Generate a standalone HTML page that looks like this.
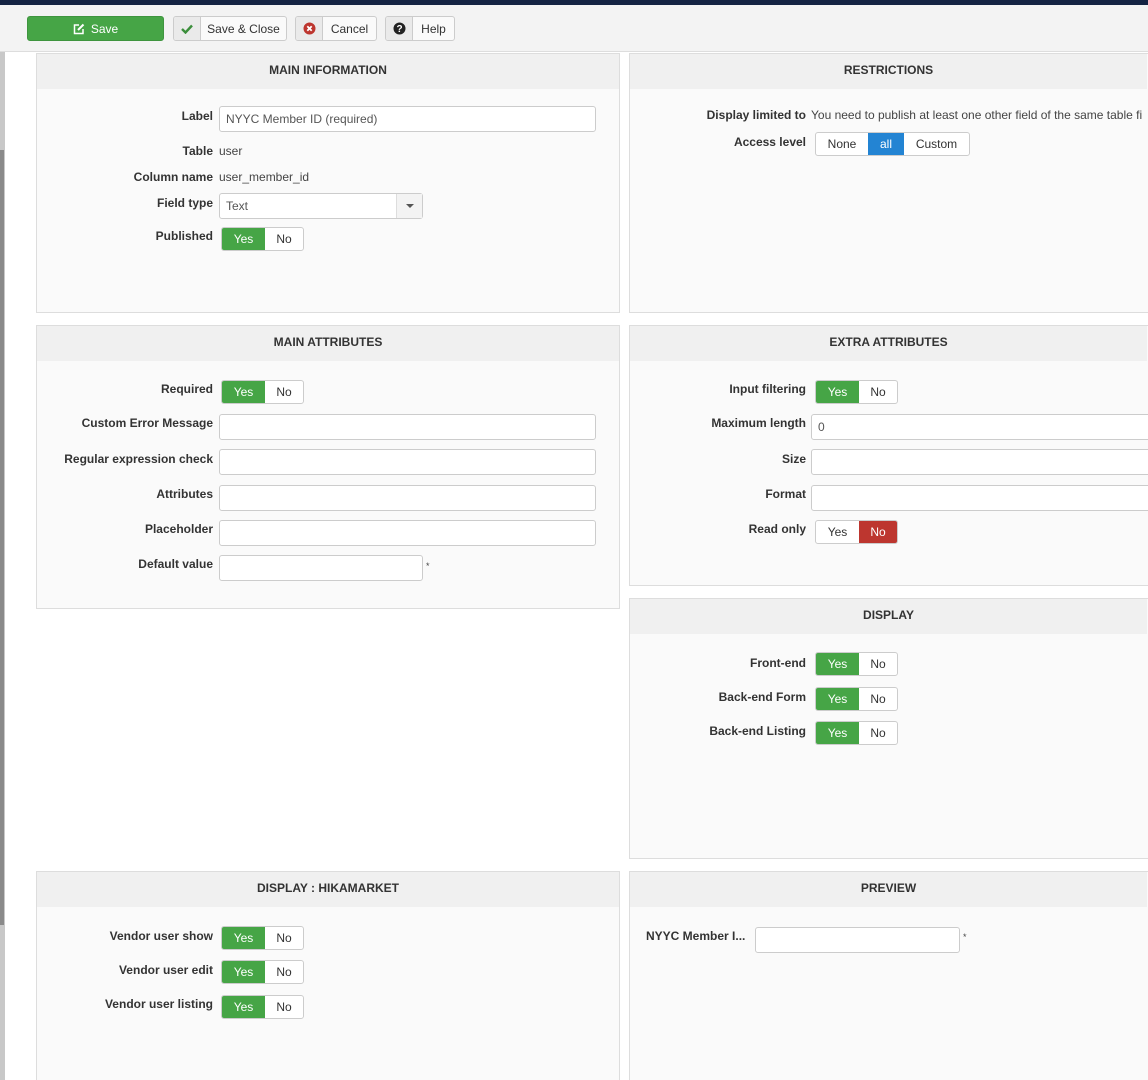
<!DOCTYPE html>
<html><head><meta charset="utf-8"><style>
*{box-sizing:border-box;margin:0;padding:0}
html,body{width:1148px;height:1080px;overflow:hidden}
body{background:#fff;font-family:"Liberation Sans",Arial,sans-serif;font-size:12px;color:#333;position:relative}
.a{position:absolute}
.topbar{left:0;top:0;width:1148px;height:5px;background:#142343}
.tool{left:0;top:5px;width:1148px;height:47px;background:#f3f3f3;border-bottom:1px solid #ddd}
.strip{left:0;top:52px;width:5px;height:1028px;background:#c8c8c8}
.strip2{left:0;top:150px;width:4px;height:775px;background:#8a8a8a}
.btn{top:16px;height:25px;border:1px solid #ccc;border-radius:3px;background:#fafafa;display:flex;align-items:center;font-size:12px;color:#333;overflow:hidden}
.btn .ic{width:27px;height:100%;background:#eaeaea;border-right:1px solid #ccc;display:flex;align-items:center;justify-content:center}
.btn .tx{flex:1;text-align:center}
.panel{background:#fafafa;border:1px solid #ddd}
.ph{position:absolute;left:0;top:0;right:0;height:35px;background:#f0f0f0;text-align:center;line-height:33px;font-weight:bold;font-size:12px;color:#333}
.lbl{font-weight:bold;text-align:right;width:177px;font-size:12px;color:#333}
.val{font-size:12px;color:#444}
.inp{height:26px;background:#fff;border:1px solid #ccc;border-radius:3px;font-size:12px;color:#555;padding-left:6px;line-height:24px}
.tog{height:24px;display:flex;border:1px solid #ccc;border-radius:3px;overflow:hidden;font-size:12px;background:#fff}
.tog span{display:flex;align-items:center;justify-content:center;color:#333}
.tog .y{width:43px}.tog .n{width:38px}
.g{background:#46a546;color:#fff!important}
.r{background:#bd362f;color:#fff!important}
.b{background:#2384d3;color:#fff!important}
</style></head><body>
<div class="a topbar"></div>
<div class="a tool"></div>
<div class="a strip"></div>
<div class="a strip2"></div>

<div class="a btn" style="left:27px;width:137px;background:#46a546;border-color:#3f953f;color:#fff;justify-content:center">
<svg width="12" height="12" viewBox="0 0 12 12" style="margin-right:6px"><path d="M6 2 H1.5 V10.5 H10 V6" fill="none" stroke="#fff" stroke-width="1.5"/><path d="M5 7 L10.5 1.5" stroke="#fff" stroke-width="2"/></svg>Save</div>
<div class="a btn" style="left:173px;width:114px"><div class="ic"><svg width="12" height="10" viewBox="0 0 12 10"><path d="M1 5 L4.5 8.5 L11 1.5" fill="none" stroke="#3b8e3b" stroke-width="2.4"/></svg></div><div class="tx">Save &amp; Close</div></div>
<div class="a btn" style="left:295px;width:82px"><div class="ic"><svg width="13" height="13" viewBox="0 0 13 13"><circle cx="6.5" cy="6.5" r="6" fill="#bd362f"/><path d="M4.3 4.3 L8.7 8.7 M8.7 4.3 L4.3 8.7" stroke="#fff" stroke-width="1.8"/></svg></div><div class="tx">Cancel</div></div>
<div class="a btn" style="left:385px;width:70px"><div class="ic"><svg width="13" height="13" viewBox="0 0 13 13"><circle cx="6.5" cy="6.5" r="6" fill="#222"/><text x="6.5" y="10" text-anchor="middle" font-size="10" font-weight="bold" fill="#fff" font-family="Liberation Sans">?</text></svg></div><div class="tx">Help</div></div>

<!-- MAIN INFORMATION -->
<div class="a panel" style="left:36px;top:53px;width:584px;height:260px"><div class="ph">MAIN INFORMATION</div></div>
<div class="a lbl" style="left:36px;top:109px">Label</div>
<div class="a inp" style="left:219px;top:106px;width:377px">NYYC Member ID (required)</div>
<div class="a lbl" style="left:36px;top:144px">Table</div><div class="a val" style="left:219px;top:144px">user</div>
<div class="a lbl" style="left:36px;top:170px">Column name</div><div class="a val" style="left:219px;top:170px">user_member_id</div>
<div class="a lbl" style="left:36px;top:196px">Field type</div>
<div class="a inp" style="left:219px;top:193px;width:204px">Text</div>
<div class="a" style="left:396px;top:194px;width:26px;height:24px;background:#f3f3f3;border-left:1px solid #ddd"><svg width="26" height="24"><path d="M9 10 L17 10 L13 14Z" fill="#555"/></svg></div>
<div class="a lbl" style="left:36px;top:229px">Published</div>
<div class="a tog" style="left:221px;top:227px"><span class="y g">Yes</span><span class="n">No</span></div>

<!-- RESTRICTIONS -->
<div class="a panel" style="left:629px;top:53px;width:560px;height:260px"><div class="ph" style="right:41px">RESTRICTIONS</div></div>
<div class="a lbl" style="left:629px;top:108px">Display limited to</div>
<div class="a val" style="left:811px;top:108px;white-space:nowrap">You need to publish at least one other field of the same table fi</div>
<div class="a lbl" style="left:629px;top:135px">Access level</div>
<div class="a tog" style="left:815px;top:132px"><span style="width:52px">None</span><span class="b" style="width:36px">all</span><span style="width:65px">Custom</span></div>

<!-- MAIN ATTRIBUTES -->
<div class="a panel" style="left:36px;top:325px;width:584px;height:284px"><div class="ph">MAIN ATTRIBUTES</div></div>
<div class="a lbl" style="left:36px;top:382px">Required</div>
<div class="a tog" style="left:221px;top:380px"><span class="y g">Yes</span><span class="n">No</span></div>
<div class="a lbl" style="left:36px;top:416px">Custom Error Message</div><div class="a inp" style="left:219px;top:414px;width:377px"></div>
<div class="a lbl" style="left:36px;top:452px">Regular expression check</div><div class="a inp" style="left:219px;top:449px;width:377px"></div>
<div class="a lbl" style="left:36px;top:487px">Attributes</div><div class="a inp" style="left:219px;top:485px;width:377px"></div>
<div class="a lbl" style="left:36px;top:522px">Placeholder</div><div class="a inp" style="left:219px;top:520px;width:377px"></div>
<div class="a lbl" style="left:36px;top:557px">Default value</div><div class="a inp" style="left:219px;top:555px;width:204px"></div>
<div class="a val" style="left:426px;top:561px;font-size:9px">*</div>

<!-- EXTRA ATTRIBUTES -->
<div class="a panel" style="left:629px;top:325px;width:560px;height:261px"><div class="ph" style="right:41px">EXTRA ATTRIBUTES</div></div>
<div class="a lbl" style="left:629px;top:382px">Input filtering</div>
<div class="a tog" style="left:815px;top:380px"><span class="y g">Yes</span><span class="n">No</span></div>
<div class="a lbl" style="left:629px;top:416px">Maximum length</div><div class="a inp" style="left:811px;top:414px;width:360px">0</div>
<div class="a lbl" style="left:629px;top:452px">Size</div><div class="a inp" style="left:811px;top:449px;width:360px"></div>
<div class="a lbl" style="left:629px;top:487px">Format</div><div class="a inp" style="left:811px;top:485px;width:360px"></div>
<div class="a lbl" style="left:629px;top:522px">Read only</div>
<div class="a tog" style="left:815px;top:520px"><span class="y">Yes</span><span class="n r">No</span></div>

<!-- DISPLAY -->
<div class="a panel" style="left:629px;top:598px;width:560px;height:261px"><div class="ph" style="right:41px">DISPLAY</div></div>
<div class="a lbl" style="left:629px;top:656px">Front-end</div>
<div class="a tog" style="left:815px;top:652px"><span class="y g">Yes</span><span class="n">No</span></div>
<div class="a lbl" style="left:629px;top:690px">Back-end Form</div>
<div class="a tog" style="left:815px;top:687px"><span class="y g">Yes</span><span class="n">No</span></div>
<div class="a lbl" style="left:629px;top:724px">Back-end Listing</div>
<div class="a tog" style="left:815px;top:721px"><span class="y g">Yes</span><span class="n">No</span></div>

<!-- HIKAMARKET -->
<div class="a panel" style="left:36px;top:871px;width:584px;height:240px"><div class="ph">DISPLAY : HIKAMARKET</div></div>
<div class="a lbl" style="left:36px;top:929px">Vendor user show</div>
<div class="a tog" style="left:221px;top:926px"><span class="y g">Yes</span><span class="n">No</span></div>
<div class="a lbl" style="left:36px;top:963px">Vendor user edit</div>
<div class="a tog" style="left:221px;top:960px"><span class="y g">Yes</span><span class="n">No</span></div>
<div class="a lbl" style="left:36px;top:997px">Vendor user listing</div>
<div class="a tog" style="left:221px;top:995px"><span class="y g">Yes</span><span class="n">No</span></div>

<!-- PREVIEW -->
<div class="a panel" style="left:629px;top:871px;width:560px;height:240px"><div class="ph" style="right:41px">PREVIEW</div></div>
<div class="a lbl" style="left:646px;top:929px;text-align:left;width:110px">NYYC Member I...</div>
<div class="a inp" style="left:755px;top:927px;width:205px"></div>
<div class="a val" style="left:963px;top:932px;font-size:9px">*</div>
</body></html>
